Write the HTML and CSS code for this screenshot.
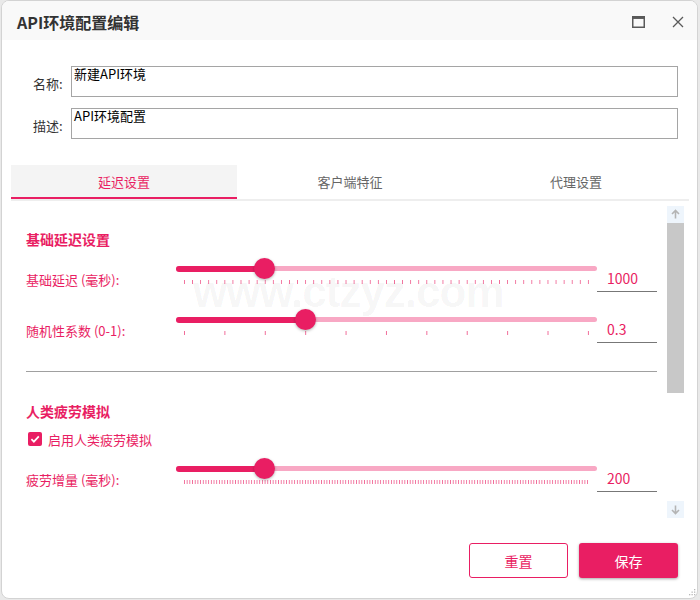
FILE: index.html
```html
<!DOCTYPE html>
<html lang="zh-CN">
<head>
    <meta charset="UTF-8">
    <meta name="viewport" content="width=device-width, initial-scale=1.0">
    <title>API环境配置编辑</title>
    <link rel="stylesheet" href="styles.css">
</head>
<body>
    <div class="window">
        <div class="titlebar">
            <span class="title">API环境配置编辑</span>
            <div class="winBtns">
                <svg class="winIcon" width="13" height="12" viewBox="0 0 13 12">
                    <rect x="0.75" y="0.75" width="11.5" height="10.5" fill="none" stroke="#5a5a5a" stroke-width="1.5"/>
                    <rect x="0.75" y="0.75" width="11.5" height="2.2" fill="#5a5a5a"/>
                </svg>
                <svg class="winIcon" width="12" height="12" viewBox="0 0 12 12">
                    <path d="M1 1 L11 11 M11 1 L1 11" stroke="#5a5a5a" stroke-width="1.3" fill="none"/>
                </svg>
            </div>
        </div>

        <div class="form">
            <div class="formRow">
                <label class="formLabel">名称:</label>
                <textarea class="field">新建API环境</textarea>
            </div>
            <div class="formRow">
                <label class="formLabel">描述:</label>
                <textarea class="field">API环境配置</textarea>
            </div>
        </div>

        <div class="tabs">
            <div class="tab active">延迟设置</div>
            <div class="tab">客户端特征</div>
            <div class="tab">代理设置</div>
        </div>

        <div class="panel">
            <div class="panelBody">
                <div class="watermark">www.ctzyz.com</div>

                <h3 class="groupTitle">基础延迟设置</h3>

                <div class="sliderRow">
                    <label class="rowLabel">基础延迟 (毫秒):</label>
                    <div class="slider">
                        <div class="track">
                            <div class="fill" style="width:88.8px;"></div>
                            <span class="thumb" style="left:88.8px;"></span>
                        </div>
                        <div class="ticks" style="background-size:8.08px 4px;"></div>
                    </div>
                    <input class="value" type="text" value="1000">
                </div>

                <div class="sliderRow second">
                    <label class="rowLabel">随机性系数 (0-1):</label>
                    <div class="slider">
                        <div class="track">
                            <div class="fill" style="width:129.2px;"></div>
                            <span class="thumb" style="left:129.2px;"></span>
                        </div>
                        <div class="ticks" style="background-size:40.4px 4px;"></div>
                    </div>
                    <input class="value" type="text" value="0.3">
                </div>

                <div class="divider"></div>

                <h3 class="groupTitle fatigue">人类疲劳模拟</h3>

                <label class="checkRow">
                    <span class="checkbox">
                        <svg width="14" height="14" viewBox="0 0 14 14">
                            <path d="M3.4 7.2 L5.9 9.7 L10.8 4.4" stroke="#fff" stroke-width="1.7" fill="none"/>
                        </svg>
                    </span>
                    启用人类疲劳模拟
                </label>

                <div class="sliderRow third">
                    <label class="rowLabel">疲劳增量 (毫秒):</label>
                    <div class="slider">
                        <div class="track">
                            <div class="fill" style="width:88.8px;"></div>
                            <span class="thumb" style="left:88.8px;"></span>
                        </div>
                        <div class="ticks" style="background-size:2.693px 4px;"></div>
                    </div>
                    <input class="value" type="text" value="200">
                </div>
            </div>

            <div class="scrollbar">
                <div class="scrollBtn">
                    <svg width="17" height="17" viewBox="0 0 17 17">
                        <path d="M8.5 4.5 L8.5 12.5 M5 8 L8.5 4.5 L12 8" stroke="#b4b4b4" stroke-width="1.6" fill="none"/>
                    </svg>
                </div>
                <div class="scrollThumb"></div>
                <div class="scrollSpace"></div>
                <div class="scrollBtn">
                    <svg width="17" height="17" viewBox="0 0 17 17">
                        <path d="M8.5 4.5 L8.5 12.5 M5 9 L8.5 12.5 L12 9" stroke="#b4b4b4" stroke-width="1.6" fill="none"/>
                    </svg>
                </div>
            </div>
        </div>

        <div class="footer">
            <button class="btn reset">重置</button>
            <button class="btn save">保存</button>
        </div>

        <svg class="grip" width="9" height="9" viewBox="0 0 9 9">
            <rect x="7" y="1" width="1.3" height="1.3" fill="#b8b8b8"/>
            <rect x="4.5" y="3.5" width="1.3" height="1.3" fill="#b8b8b8"/>
            <rect x="7" y="3.5" width="1.3" height="1.3" fill="#b8b8b8"/>
            <rect x="2" y="6" width="1.3" height="1.3" fill="#b8b8b8"/>
            <rect x="4.5" y="6" width="1.3" height="1.3" fill="#b8b8b8"/>
            <rect x="7" y="6" width="1.3" height="1.3" fill="#b8b8b8"/>
        </svg>
    </div>
</body>
</html>
```

FILE: styles.css
```css
* {
    padding: 0;
    margin: 0;
    box-sizing: border-box;
}

body {
    background-color: #e9e9e9;
    font-family: "Noto Sans CJK SC", "Noto Sans", sans-serif;
    font-size: 13px;
    color: #333;
}

.window {
    position: relative;
    width: 697px;
    height: 599px;
    margin-left: 1px;
    background-color: #fff;
    border: 1px solid #d3d3d3;
    border-radius: 8px;
    overflow: hidden;
    display: flex;
    flex-direction: column;
}

/* title bar */
.titlebar {
    height: 39px;
    flex: none;
    padding: 2px 13px 0 15px;
    background-color: #f9f9f9;
    display: flex;
    align-items: center;
    justify-content: space-between;
}
.title {
    font-size: 16px;
    font-weight: bold;
    color: #333;
}
.winBtns {
    display: flex;
    align-items: center;
    gap: 27px;
}
.winIcon {
    display: block;
}

/* name / description */
.form {
    padding: 26px 19px 0 31px;
    display: flex;
    flex-direction: column;
    gap: 11px;
}
.formRow {
    display: flex;
    align-items: center;
    gap: 11px;
}
.formLabel {
    width: 27px;
    flex: none;
    white-space: nowrap;
    font-size: 13px;
    color: #333;
    padding-top: 3px;
}
.field {
    flex: 1;
    height: 31px;
    padding: 0 2px;
    border: 1px solid #a5a5a5;
    font-family: inherit;
    font-size: 13px;
    line-height: 13px;
    color: #000;
    resize: none;
    overflow: hidden;
    outline: none;
}

/* tabs */
.tabs {
    width: 678px;
    margin: 26px 0 0 9px;
    display: flex;
    border-bottom: 2px solid #eee;
}
.tab {
    flex: 1;
    height: 34px;
    line-height: 33px;
    text-align: center;
    font-size: 13px;
    color: #666;
}
.tab.active {
    color: #e91e63;
    background-color: #f4f4f4;
    box-shadow: inset 0 -2px 0 #e91e63;
}

/* scroll panel */
.panel {
    width: 673px;
    height: 312px;
    margin: 5px 0 0 9px;
    display: flex;
    overflow: hidden;
}
.panelBody {
    position: relative;
    flex: 1;
    padding: 23px 10px 0 15px;
    display: flex;
    flex-direction: column;
    overflow: hidden;
}
.watermark {
    position: absolute;
    left: 182px;
    top: 62px;
    font-family: "Liberation Sans", sans-serif;
    font-size: 44px;
    line-height: 48px;
    font-weight: bold;
    letter-spacing: -1px;
    color: rgba(0, 0, 0, 0.045);
    white-space: nowrap;
    pointer-events: none;
}

.groupTitle {
    font-size: 14px;
    line-height: 20px;
    font-weight: bold;
    color: #e91e63;
}
.groupTitle.fatigue {
    margin-top: 29px;
}

.sliderRow {
    display: grid;
    grid-template-columns: 150px 421px 60px;
    height: 36px;
    margin-top: 7px;
}
.sliderRow.second {
    margin-top: 15px;
}
.sliderRow.third {
    margin-top: 7px;
}
.rowLabel {
    margin-top: 15px;
    font-size: 13px;
    line-height: 18px;
    color: #e91e63;
    white-space: nowrap;
}

.slider {
    padding-top: 10px;
}
.track {
    position: relative;
    height: 5px;
    border-radius: 3px;
    background-color: #f8a8c4;
}
.fill {
    height: 6px;
    margin-top: -0.5px;
    border-radius: 3px;
    background-color: #e91e63;
}
.thumb {
    position: absolute;
    top: 50%;
    width: 21px;
    height: 21px;
    margin: -10.5px 0 0 -10.5px;
    border-radius: 50%;
    background-color: #e91e63;
    box-shadow: 0 1px 3px rgba(0, 0, 0, 0.3);
}
.ticks {
    width: 405px;
    height: 4px;
    margin: 9px 0 0 8px;
    background-image: linear-gradient(to right, rgba(233, 30, 99, 0.65) 0, rgba(233, 30, 99, 0.65) 1px, transparent 1px);
    background-repeat: repeat-x;
}

.value {
    width: 60px;
    height: 25px;
    margin-top: 11px;
    padding: 0 0 3px 10px;
    border: none;
    border-bottom: 1px solid #777;
    font-family: inherit;
    font-size: 14px;
    color: #e91e63;
    background: transparent;
    outline: none;
}

.divider {
    height: 1px;
    margin-top: 28px;
    background-color: #a0a0a0;
}

.checkRow {
    display: flex;
    align-items: center;
    gap: 6px;
    height: 20px;
    margin: 8px 0 0 2px;
    font-size: 13px;
    color: #e91e63;
}
.checkbox {
    width: 14px;
    height: 14px;
    border-radius: 2px;
    background-color: #e91e63;
}
.checkbox svg {
    display: block;
}

/* fake scrollbar */
.scrollbar {
    width: 17px;
    flex: none;
    display: flex;
    flex-direction: column;
}
.scrollBtn {
    height: 17px;
    background-color: #eef5fc;
}
.scrollBtn svg {
    display: block;
}
.scrollThumb {
    height: 170px;
    background-color: #c8c8c8;
}
.scrollSpace {
    flex: 1;
}

/* buttons */
.footer {
    padding: 25px 19px 0 0;
    display: flex;
    justify-content: flex-end;
    gap: 11px;
}
.btn {
    width: 99px;
    height: 35px;
    border-radius: 3px;
    font-family: inherit;
    font-size: 14px;
    cursor: pointer;
}
.reset {
    background-color: #fff;
    border: 1px solid #e91e63;
    color: #e91e63;
}
.save {
    background-color: #e91e63;
    border: none;
    color: #fff;
    box-shadow: 0 1px 3px rgba(0, 0, 0, 0.35);
}

.grip {
    position: absolute;
    right: 1px;
    bottom: 1px;
}
```
